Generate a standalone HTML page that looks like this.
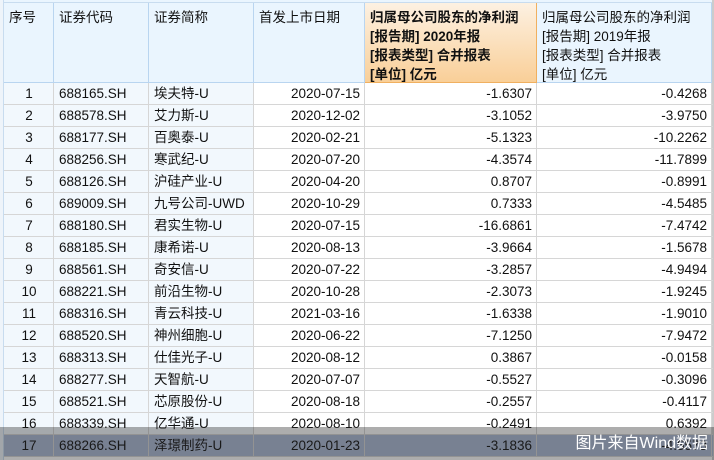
<!DOCTYPE html>
<html><head><meta charset="utf-8"><style>
*{margin:0;padding:0;box-sizing:border-box}
body{width:714px;height:460px;overflow:hidden;background:#fff;font-family:"Liberation Sans","Noto Sans CJK SC",sans-serif;font-size:13.5px;color:#111;position:relative}
.hdr{position:absolute;top:3px;height:80px;background:#eaf5fe;border-right:1px solid #b9d5f0;border-bottom:1px solid #b9d5f0;padding:5px 5px;line-height:19px}
.row{position:absolute;left:4px;width:709px;height:22px;border-bottom:1px solid #d6d6d6}
.c{position:absolute;top:0;height:21px;line-height:21px;border-right:1px solid #d6d6d6;padding:0 4px 0 5px;white-space:nowrap}
.bl{background:#f2f8fd}
.r{text-align:right}
</style></head><body>
<div style="position:absolute;left:0;top:0;width:714px;height:3px;background:#eaf5fe;border-bottom:1px solid #c8dcef"></div>
<div style="position:absolute;left:0;top:0;width:4px;height:460px;background:#eef4fa;border-right:1px solid #c8dcef"></div>
<div style="position:absolute;left:712px;top:0;width:2px;height:460px;background:#ccc"></div>
<div class="hdr" style="left:4px;width:50px">序号</div>
<div class="hdr" style="left:54px;width:95px">证券代码</div>
<div class="hdr" style="left:149px;width:105px">证券简称</div>
<div class="hdr" style="left:254px;width:111px">首发上市日期</div>
<div class="hdr" style="left:365px;width:172px;background:linear-gradient(#fdf1e2,#f9cf98);border-right:1px solid #f0b060;border-bottom:1px solid #f0b060;font-weight:bold">归属母公司股东的净利润<br>[报告期] 2020年报<br>[报表类型] 合并报表<br>[单位] 亿元</div>
<div class="hdr" style="left:537px;width:175px">归属母公司股东的净利润<br>[报告期] 2019年报<br>[报表类型] 合并报表<br>[单位] 亿元</div>
<div id="rows"></div>
<script>
var d=[["688165.SH","埃夫特-U","2020-07-15","-1.6307","-0.4268"],["688578.SH","艾力斯-U","2020-12-02","-3.1052","-3.9750"],["688177.SH","百奥泰-U","2020-02-21","-5.1323","-10.2262"],["688256.SH","寒武纪-U","2020-07-20","-4.3574","-11.7899"],["688126.SH","沪硅产业-U","2020-04-20","0.8707","-0.8991"],["689009.SH","九号公司-UWD","2020-10-29","0.7333","-4.5485"],["688180.SH","君实生物-U","2020-07-15","-16.6861","-7.4742"],["688185.SH","康希诺-U","2020-08-13","-3.9664","-1.5678"],["688561.SH","奇安信-U","2020-07-22","-3.2857","-4.9494"],["688221.SH","前沿生物-U","2020-10-28","-2.3073","-1.9245"],["688316.SH","青云科技-U","2021-03-16","-1.6338","-1.9010"],["688520.SH","神州细胞-U","2020-06-22","-7.1250","-7.9472"],["688313.SH","仕佳光子-U","2020-08-12","0.3867","-0.0158"],["688277.SH","天智航-U","2020-07-07","-0.5527","-0.3096"],["688521.SH","芯原股份-U","2020-08-18","-0.2557","-0.4117"],["688339.SH","亿华通-U","2020-08-10","-0.2491","0.6392"],["688266.SH","泽璟制药-U","2020-01-23","-3.1836","-4.5573"]];
var h="";
d.forEach(function(r,i){var top=83+i*22;var sel=i==16;
h+='<div class="row" style="top:'+top+'px;'+(sel?'background:#aab8d4':'')+'">'+
'<div class="c '+(sel?'':'bl')+'" style="left:0;width:50px;text-align:center">'+(i+1)+'</div>'+
'<div class="c '+(sel?'':'bl')+'" style="left:50px;width:95px">'+r[0]+'</div>'+
'<div class="c '+(sel?'':'bl')+'" style="left:145px;width:105px">'+r[1]+'</div>'+
'<div class="c r" style="left:250px;width:111px">'+r[2]+'</div>'+
'<div class="c r" style="left:361px;width:172px">'+r[3]+'</div>'+
'<div class="c r" style="left:533px;width:175px">'+r[4]+'</div></div>';});
document.getElementById("rows").innerHTML=h;
</script>
<div style="position:absolute;left:0;top:427px;width:714px;height:33px;background:rgba(40,40,40,0.38)"></div>
<div style="position:absolute;right:6px;top:433px;color:#fff;font-size:16px;line-height:22px">图片来自Wind数据</div>
</body></html>
